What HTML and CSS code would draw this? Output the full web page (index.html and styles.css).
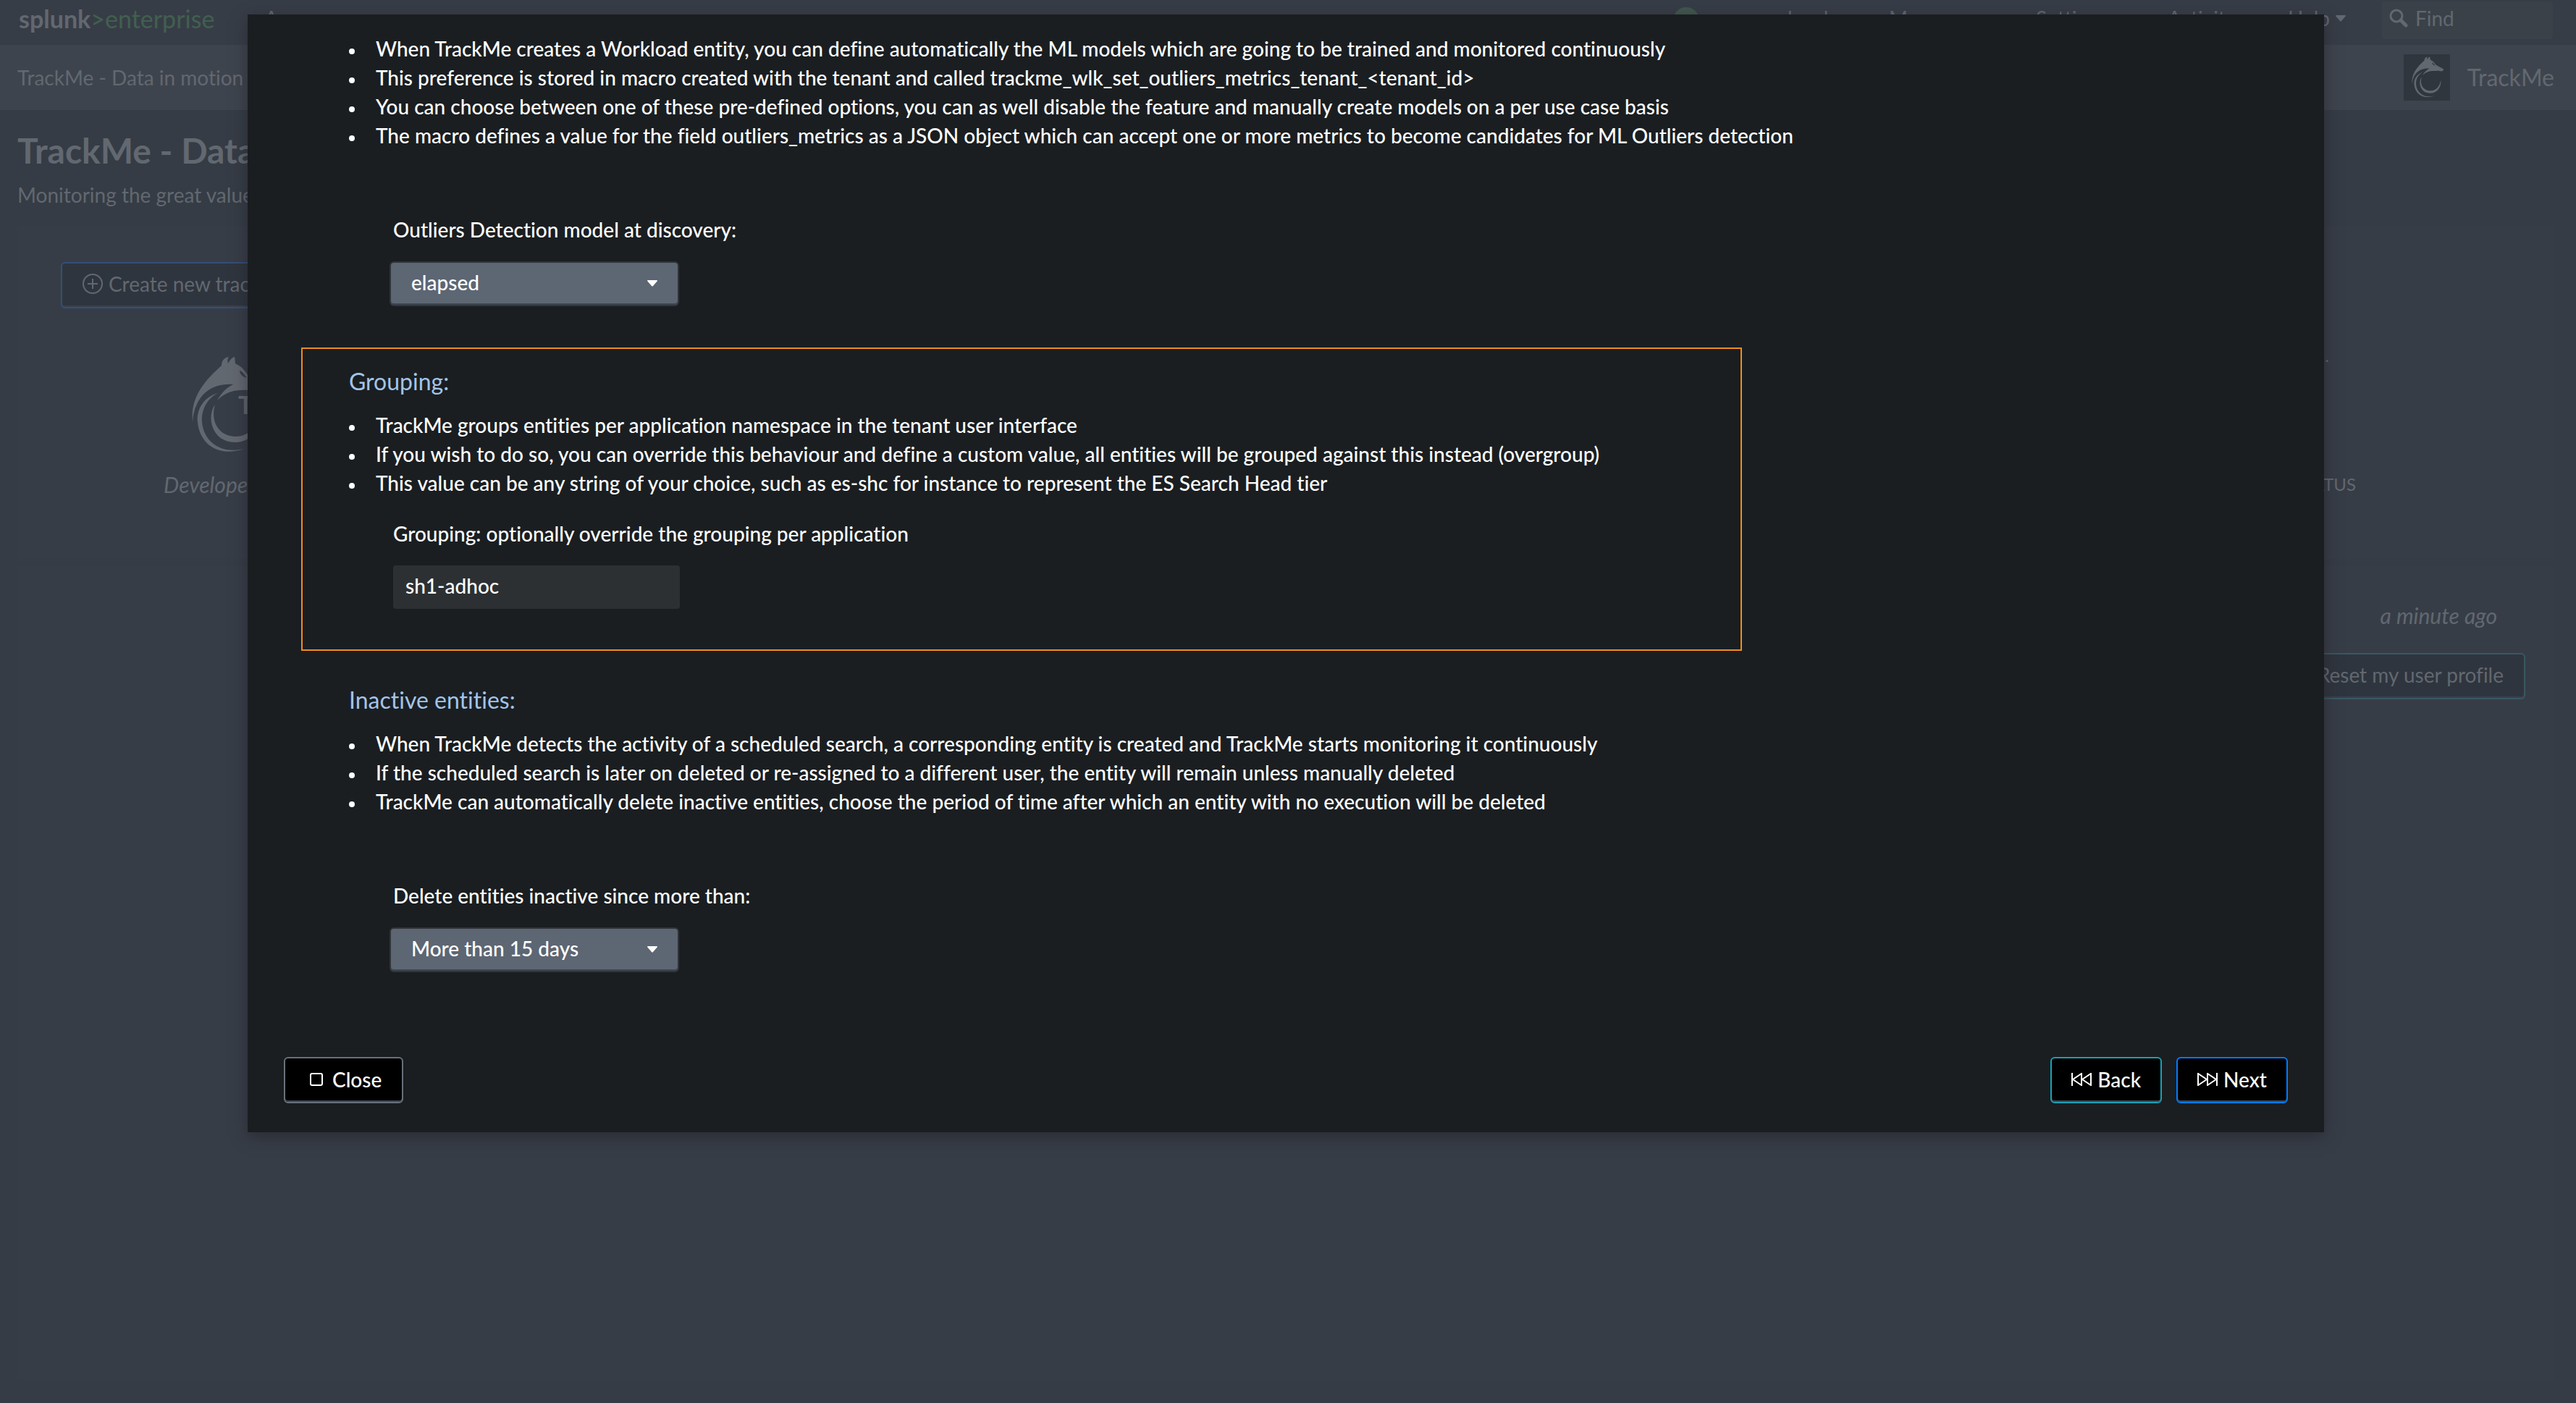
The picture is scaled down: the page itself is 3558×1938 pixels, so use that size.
FILE: index.html
```html
<!DOCTYPE html>
<html lang="en">
<head>
<meta charset="utf-8">
<meta name="viewport" content="width=device-width, initial-scale=1">
<title>TrackMe - Data in motion tracking</title>
<link rel="stylesheet" href="styles.css">
</head>
<body>
<svg class="defs" aria-hidden="true">
  <symbol id="wolf" viewBox="0 0 150 150">
    <path fill-rule="evenodd" d="M27 98C24 66 40 44 67 20C67 14 70 9 77 8C75 11 75 14 76 17C78 13 81 9 85 8C86 12 85 16 87 18C93 20 98 25 103 33C110 39 120 43 129 48C129 52 127 54 123 55C116 55 111 52 103 54C85 53 72 57 61 68C66 59 73 51 83 46C56 44 30 58 27 98ZM92 27C92 32 97 36 102 37C99 33 96 28 92 27Z"/>
    <path d="M62 58C40 64 32 84 34 98C36 124 58 148 98 135C62 143 42 122 40 98C39 82 46 66 62 58Z"/>
    <path d="M58 74C46 90 53 126 86 126C108 126 123 106 120 83C117 106 102 118 87 118C64 118 51 98 58 74Z"/>
  </symbol>
  <symbol id="caret" viewBox="0 0 14 9"><path d="M1 0H13Q14 0 14 1L8 8Q7 9 6 8L0 1Q0 0 1 0Z"/></symbol>
</svg>

<div class="page">
  <header class="topbar">
    <div class="brand">
      <a class="logo" href="#"><b>splunk</b><span>&gt;enterprise</span></a>
      <a href="#">Apps</a>
    </div>
    <nav class="topnav">
      <span class="health"></span>
      <a href="#">local</a>
      <a href="#">Messages</a>
      <a href="#">Settings</a>
      <a href="#">Activity</a>
      <a href="#">Help <svg class="caret"><use href="#caret"/></svg></a>
      <label class="find">
        <svg viewBox="0 0 26 26" fill="none" stroke="currentColor"><circle cx="10" cy="10" r="8" stroke-width="3"/><path d="M16 16L23 23" stroke-width="5" stroke-linecap="round"/></svg>
        <input type="search" placeholder="Find" aria-label="Find">
      </label>
    </nav>
  </header>

  <div class="appbar">
    <a href="#">TrackMe - Data in motion tracking</a>
    <a class="app" href="#"><svg class="app-icon"><use href="#wolf"/></svg>TrackMe</a>
  </div>

  <main class="dashboard">
    <div class="head">
      <h1>TrackMe - Data in motion</h1>
      <p>Monitoring the great value of data</p>
    </div>
    <section class="panel tenants">
      <button class="btn primary" type="button">
        <svg class="plus" viewBox="0 0 28 28" fill="none" stroke="currentColor" stroke-width="2"><circle cx="14" cy="14" r="13"/><path d="M14 7V21M7 14H21"/></svg>
        Create new tracker
      </button>
      <div class="tiles">
        <figure class="tile">
          <svg viewBox="0 0 150 150"><use href="#wolf"/><text x="90" y="87">T</text></svg>
          <figcaption>Developer</figcaption>
        </figure>
        <div class="status">
          <p class="value">I.</p>
          <p>STATUS</p>
        </div>
      </div>
    </section>
    <section class="panel activity">
      <time>a minute ago</time>
      <button class="btn info" type="button">Reset my user profile</button>
    </section>
  </main>
</div>

<div class="backdrop">
  <div class="modal" role="dialog" aria-modal="true" aria-label="Workload tracker options">
    <section class="step">
      <ul>
        <li>When TrackMe creates a Workload entity, you can define automatically the ML models which are going to be trained and monitored continuously</li>
        <li>This preference is stored in macro created with the tenant and called trackme_wlk_set_outliers_metrics_tenant_&lt;tenant_id&gt;</li>
        <li>You can choose between one of these pre-defined options, you can as well disable the feature and manually create models on a per use case basis</li>
        <li>The macro defines a value for the field outliers_metrics as a JSON object which can accept one or more metrics to become candidates for ML Outliers detection</li>
      </ul>
      <div class="field spaced">
        <label for="outliers">Outliers Detection model at discovery:</label>
        <div class="select">
          <select id="outliers"><option>elapsed</option></select>
          <svg class="caret"><use href="#caret"/></svg>
        </div>
      </div>
    </section>

    <section class="step highlighted">
      <h2>Grouping:</h2>
      <ul>
        <li>TrackMe groups entities per application namespace in the tenant user interface</li>
        <li>If you wish to do so, you can override this behaviour and define a custom value, all entities will be grouped against this instead (overgroup)</li>
        <li>This value can be any string of your choice, such as es-shc for instance to represent the ES Search Head tier</li>
      </ul>
      <div class="field">
        <label for="grouping">Grouping: optionally override the grouping per application</label>
        <input id="grouping" type="text" value="sh1-adhoc">
      </div>
    </section>

    <section class="step">
      <h2>Inactive entities:</h2>
      <ul>
        <li>When TrackMe detects the activity of a scheduled search, a corresponding entity is created and TrackMe starts monitoring it continuously</li>
        <li>If the scheduled search is later on deleted or re-assigned to a different user, the entity will remain unless manually deleted</li>
        <li>TrackMe can automatically delete inactive entities, choose the period of time after which an entity with no execution will be deleted</li>
      </ul>
      <div class="field spaced">
        <label for="inactive">Delete entities inactive since more than:</label>
        <div class="select">
          <select id="inactive"><option>More than 15 days</option></select>
          <svg class="caret"><use href="#caret"/></svg>
        </div>
      </div>
    </section>

    <footer class="actions">
      <button class="action close" type="button">
        <svg viewBox="0 0 18 18" width="18" height="18"><rect x="1" y="1" width="16" height="16" rx="2"/></svg>Close
      </button>
      <button class="action back" type="button">
        <svg viewBox="0 0 28 18" width="28" height="18"><path d="M1 0V18M14 1V17L2 9ZM27 1V17L15 9Z"/></svg>Back
      </button>
      <button class="action next" type="button">
        <svg viewBox="0 0 28 18" width="28" height="18"><path d="M27 0V18M14 1V17L26 9ZM1 1V17L13 9Z"/></svg>Next
      </button>
    </footer>
  </div>
</div>
</body>
</html>
```
FILE: styles.css
```css
* { box-sizing: border-box; }

body {
  margin: 0;
  background: #353c45;
  color: #626870;
  font: 400 28px/40px Lato, "Liberation Sans", sans-serif;
  font-variant-ligatures: none;
}

h1, h2, p, ul, figure { margin: 0; padding: 0; }
a { color: inherit; text-decoration: none; }
button, input, select { font: inherit; color: inherit; margin: 0; }
svg { display: block; fill: currentColor; flex: none; }
.defs { position: absolute; width: 0; height: 0; }
.caret { width: 14px; height: 9px; }

/* Dimmed dashboard */
.page { min-height: 100vh; display: flex; flex-direction: column; }

.topbar {
  display: flex;
  justify-content: space-between;
  height: 62px;
  padding: 2px 32px 8px 26px;
  background: #373d47;
  line-height: 46px;
}
.brand { display: flex; gap: 69px; }
.logo { font-size: 34px; line-height: 48px; }
.logo b { font-weight: 700; }
.logo span { color: #41604f; }
.topnav {
  display: grid;
  grid-template-columns: 158px 140px 203px 182px 166px 130px 236px;
}
.topnav a { display: flex; align-items: center; gap: 8px; height: 46px; }
.health { width: 36px; height: 36px; margin-top: 8px; border-radius: 50%; background: #41574e; }
.find {
  display: flex;
  align-items: center;
  gap: 10px;
  height: 52px;
  padding: 0 10px 6px;
  border-radius: 4px;
  background: #3a4148;
}
.find svg { width: 26px; height: 26px; fill: none; }
.find input { flex: 1; min-width: 0; padding: 0; border: 0; outline: 0; background: none; }
.find input::placeholder { color: inherit; opacity: 1; }

.appbar {
  display: flex;
  justify-content: space-between;
  align-items: center;
  height: 90px;
  padding: 0 30px 0 24px;
  background: #3e444d;
}
.app { display: flex; align-items: center; gap: 24px; font-size: 32px; }
.app-icon { width: 64px; height: 64px; background: #30363e; }

.dashboard { flex: 1; display: flex; flex-direction: column; padding: 0 30px 30px 24px; }
.head { padding: 28px 0 23px; }
.head h1 { margin-bottom: 13px; font-size: 48px; line-height: 56px; font-weight: 700; }
.panel { background: #373d47; }
.tenants { padding: 50px 60px 83px; margin-bottom: 10px; }
.activity { flex: 1; display: flex; flex-direction: column; align-items: flex-end; gap: 32px; padding: 48px 40px; }
.activity time { padding-right: 39px; font-size: 30px; font-style: italic; }

.btn {
  display: flex;
  align-items: center;
  gap: 8px;
  height: 64px;
  padding: 0 28px 4px;
  border: 2px solid;
  border-radius: 6px;
  background: #2f353e;
  box-shadow: inset 0 -2px #3a414a;
}
.primary { border-color: #32507a; }
.info { border-color: #395862; }
.primary, .info { color: #626870; }
.plus { width: 28px; height: 28px; fill: none; }

.tiles { display: flex; justify-content: space-between; padding: 59px 214px 0 142px; }
.tile { display: flex; flex-direction: column; gap: 14px; width: 176px; }
.tile svg { width: 150px; height: 150px; align-self: center; }
.tile text { font-size: 34px; font-weight: 700; }
.tile figcaption { font-size: 30px; font-style: italic; }
.status {
  display: flex;
  flex-direction: column;
  justify-content: space-between;
  align-items: flex-end;
  margin-top: -10px;
  font-size: 24px;
}
.status .value { padding-right: 37px; line-height: 32px; }

/* Modal */
.backdrop { position: absolute; inset: 0; padding: 20px 348px 0 342px; color: #fff; font-weight: 500; }
.modal {
  padding: 0 50px 40px 74px;
  background: #1a1e21;
  box-shadow: 0 6px 20px rgba(32, 26, 34, .5);
}
.step { max-width: 1990px; padding: 25px 64px 0; border: 2px solid transparent; }
.highlighted { margin: 55px 0 21px; padding-bottom: 56px; border-color: #f28c1c; }
h2 { margin-bottom: 20px; color: #a3c4e8; font-size: 32px; line-height: 40px; font-weight: 400; }
ul { list-style: none; }
li { display: flex; align-items: center; gap: 29px; white-space: nowrap; }
li::before { content: ""; flex: none; width: 8px; height: 8px; margin-top: 8px; border-radius: 50%; background: currentColor; }

.field { display: flex; flex-direction: column; align-items: flex-start; gap: 24px; padding: 30px 0 0 61px; }
.spaced { padding-top: 90px; }
.field input {
  width: 396px;
  height: 60px;
  padding: 0 17px 4px;
  border: 0;
  border-radius: 4px;
  outline: 0;
  background: #2c3033;
}
.select { position: relative; width: 400px; height: 62px; margin-left: -5px; }
.select select {
  appearance: none;
  width: 100%;
  height: 100%;
  padding: 0 28px 4px;
  border: 2px solid #30353a;
  border-radius: 6px;
  outline: 0;
  background: #5d6673;
  box-shadow: inset 0 -2px #3e4651;
}
.select .caret { position: absolute; right: 30px; top: 26px; }

.actions { display: flex; gap: 20px; margin: 115px 0 0 -24px; }
.action {
  display: flex;
  align-items: center;
  gap: 8px;
  height: 64px;
  padding: 0 27px 2px;
  border: 2px solid;
  border-radius: 6px;
  background: #000;
  color: #fff;
  box-shadow: inset 0 -2px #3e4550;
}
.action svg { fill: none; stroke: currentColor; stroke-width: 2; }
.close { gap: 13px; margin-right: auto; padding-left: 34px; padding-right: 28px; border-color: #68717d; }
.back { border-color: #1ba0b4; }
.next { border-color: #007bff; }
```
